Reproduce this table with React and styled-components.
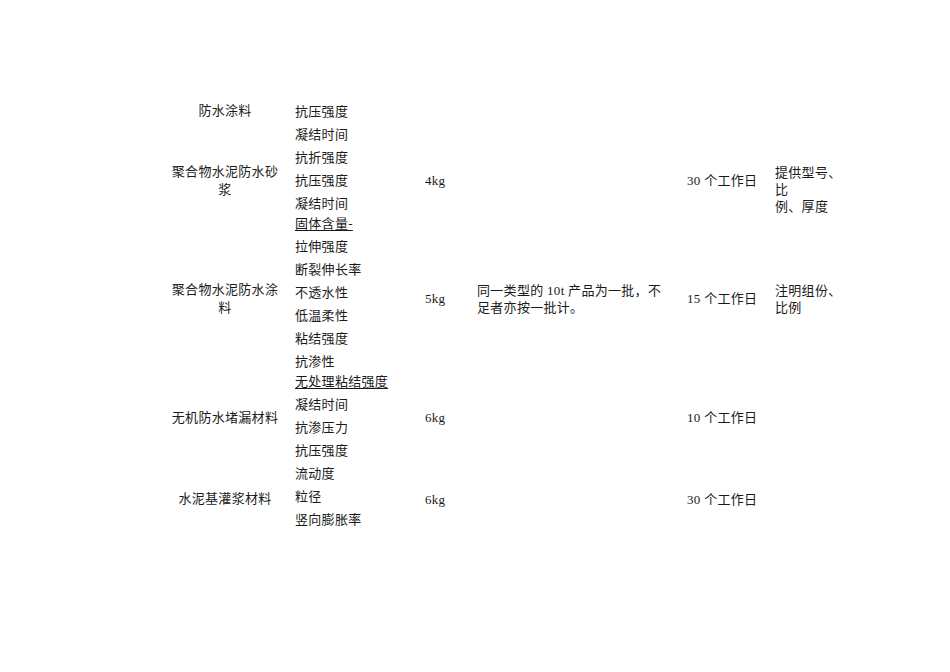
import React from "react";
import styled, { createGlobalStyle } from "styled-components";

const GlobalStyle = createGlobalStyle`
  html, body {
    margin: 0;
    padding: 0;
    background: #ffffff;
  }
  body {
    font-family: "Liberation Serif", "Noto Sans CJK SC", serif;
    color: #1a1a1a;
  }
`;

const Page = styled.div`
  width: 950px;
  height: 672px;
  box-sizing: border-box;
  padding: 100px 0 0 165px;
  background: #fff;
`;

const Table = styled.div`
  display: flex;
  flex-direction: column;
  width: 690px;
`;

// cells other than the item list are nudged down by --shift (half of margin)
const Row = styled.div`
  --shift: ${props => props.$shift || 0}px;
  display: grid;
  grid-template-columns: 120px 130px 52px 210px 88px 90px;
  align-items: center;
  font-size: 13px;
  letter-spacing: 0.3px;
`;

const Name = styled.div`
  align-self: ${props => (props.$top ? "start" : "center")};
  padding-top: ${props => (props.$top ? "2px" : "0")};
  margin-top: var(--shift);
  text-align: center;
  line-height: 18px;
`;

const Items = styled.div`
  display: flex;
  flex-direction: column;
  padding-left: 10px;
`;

const Item = styled.div`
  line-height: ${props => (props.$under ? "17px" : "23px")};
  margin-bottom: ${props => (props.$under ? "3px" : "0")};
  text-decoration: ${props => (props.$under ? "underline" : "none")};
  text-underline-offset: 2px;
  white-space: nowrap;
`;

const Cell = styled.div`
  padding-left: 10px;
  margin-top: var(--shift);
  line-height: 17px;
  white-space: nowrap;
`;

const Note = styled(Cell)`
  align-self: ${props => (props.$end ? "end" : "center")};
`;

const rows = [
  {
    name: ["防水涂料"],
    top: true,
    items: ["抗压强度", "凝结时间"],
  },
  {
    name: ["聚合物水泥防水砂", "浆"],
    items: ["抗折强度", "抗压强度", "凝结时间"],
    weight: "4kg",
    time: "30 个工作日",
    note: ["提供型号、", "比", "例、厚度"],
    noteEnd: true,
  },
  {
    name: ["聚合物水泥防水涂", "料"],
    items: ["固体含量-", "拉伸强度", "断裂伸长率", "不透水性", "低温柔性", "粘结强度", "抗渗性"],
    under: true,
    shift: 9,
    weight: "5kg",
    desc: ["同一类型的 10t 产品为一批，不", "足者亦按一批计。"],
    time: "15 个工作日",
    note: ["注明组份、", "比例"],
  },
  {
    name: ["无机防水堵漏材料"],
    items: ["无处理粘结强度", "凝结时间", "抗渗压力", "抗压强度"],
    under: true,
    weight: "6kg",
    time: "10 个工作日",
  },
  {
    name: ["水泥基灌浆材料"],
    items: ["流动度", "粒径", "竖向膨胀率"],
    shift: 5,
    weight: "6kg",
    time: "30 个工作日",
  },
];

function Lines({ lines }) {
  return lines ? lines.map((l, i) => <div key={i}>{l}</div>) : null;
}

export default function App() {
  return (
    <Page>
      <GlobalStyle />
      <Table>
        {rows.map((r, i) => (
          <Row key={i} $shift={r.shift}>
            <Name $top={r.top}>
              <Lines lines={r.name} />
            </Name>
            <Items>
              {r.items.map((it, j) => (
                <Item key={j} $under={r.under && j === 0}>
                  {it}
                </Item>
              ))}
            </Items>
            <Cell>{r.weight}</Cell>
            <Cell>
              <Lines lines={r.desc} />
            </Cell>
            <Cell>{r.time}</Cell>
            <Note $end={r.noteEnd}>
              <Lines lines={r.note} />
            </Note>
          </Row>
        ))}
      </Table>
    </Page>
  );
}
